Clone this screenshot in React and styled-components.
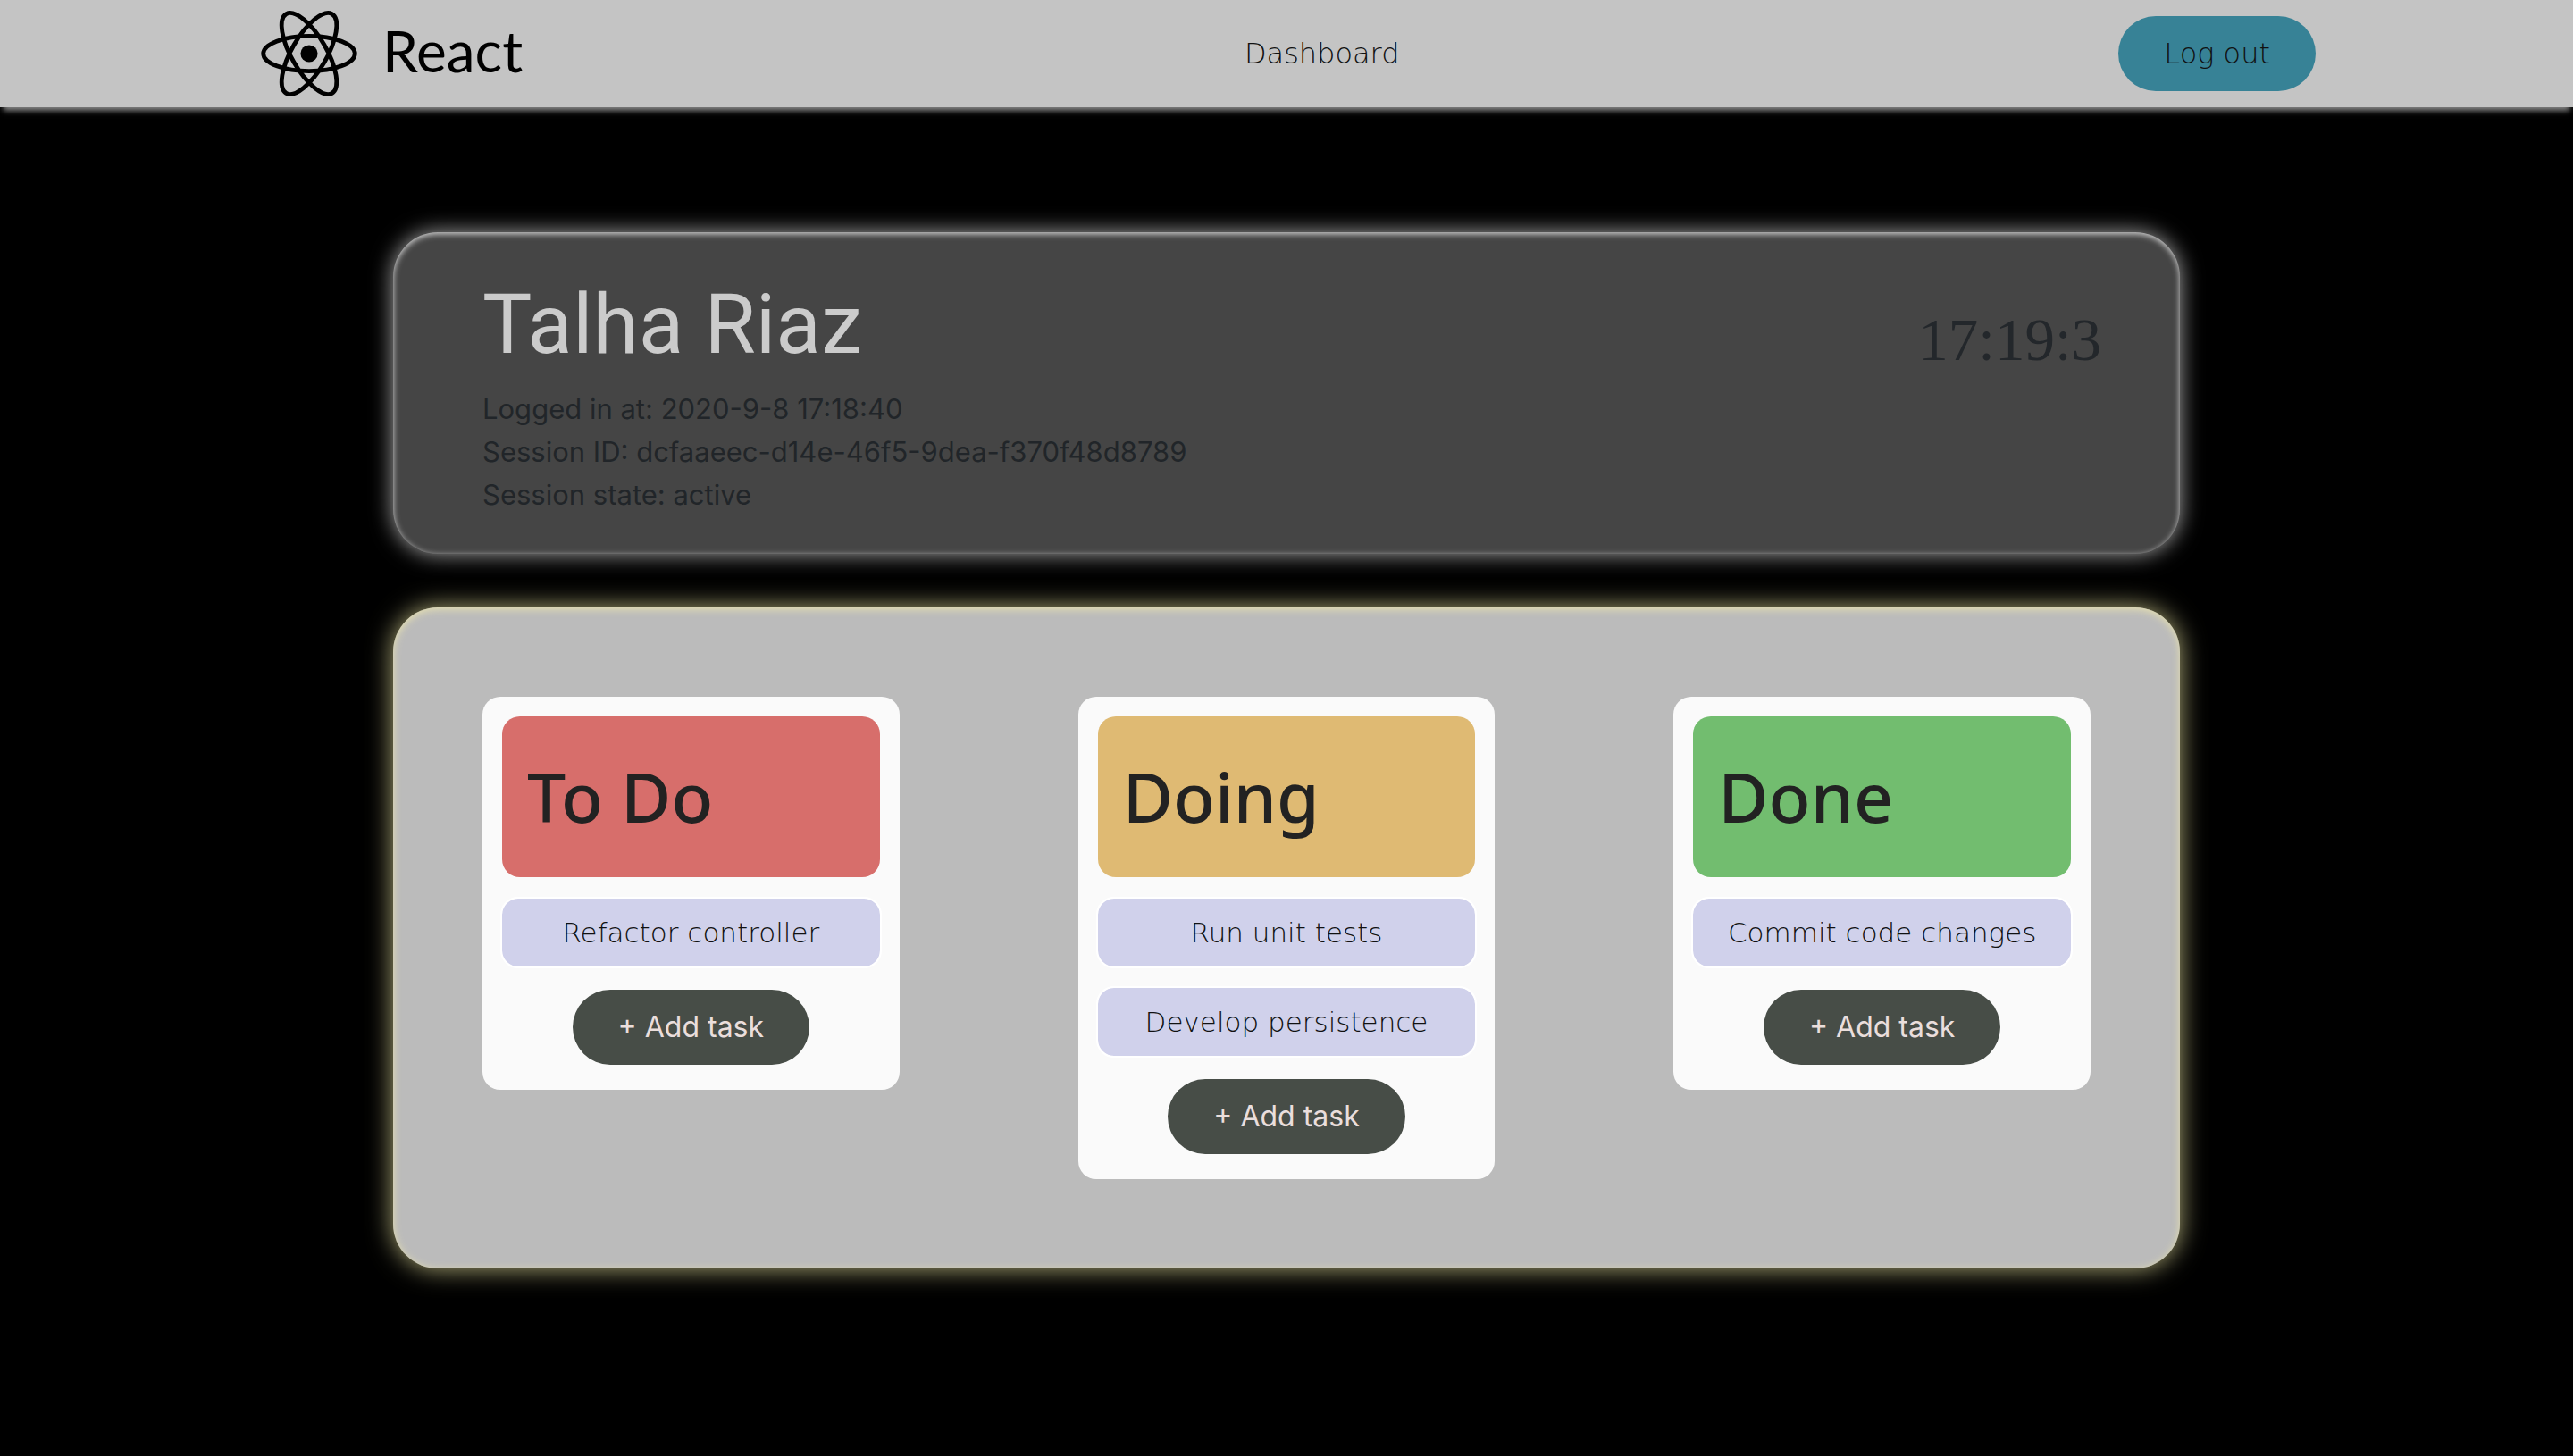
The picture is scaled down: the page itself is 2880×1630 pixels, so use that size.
import React from 'react';
import styled, { createGlobalStyle } from 'styled-components';

const thin = '"DejaVu Sans", sans-serif';
const ui = 'Inter, sans-serif';

const GlobalStyle = createGlobalStyle`
  *, *::before, *::after { box-sizing: border-box; }
  body { margin: 0; background: #000; color: #212529; font-family: ${ui}; font-size: 31px; line-height: 48px; }
  h1, h2, p, ul { margin: 0; padding: 0; }
`;

const Page = styled.div`
  min-height: 100vh;
  padding-bottom: 60px;
`;

const Header = styled.header`
  display: flex;
  align-items: center;
  justify-content: space-between;
  height: 120px;
  padding: 0 10%;
  background: #c4c4c4;
  box-shadow: 0 8px 6px -4px #858585;
`;

const Logo = styled.a`
  display: flex;
  align-items: center;
  gap: 24px;
  width: 300px;
  color: #000;
  font: 400 64px/72px Lato, sans-serif;
  text-decoration: none;
`;

const Wordmark = styled.span`
  padding-bottom: 6px;
`;

const Atom = styled.svg`
  flex: none;
  width: 116px;
  height: 104px;
`;

const NavLink = styled.a`
  color: #111;
  font: 200 32px/48px ${thin};
  text-decoration: none;
`;

const PillButton = styled.button`
  height: 84px;
  padding: 0 51px;
  border: 0;
  border-radius: 42px;
  background: ${(p) => (p.$primary ? '#378296' : '#474d47')};
  color: ${(p) => (p.$primary ? '#111' : '#eadedc')};
  font: ${(p) => (p.$primary ? `200 32px/48px ${thin}` : `400 32px/48px ${ui}`)};
  cursor: pointer;
`;

const Main = styled.main`
  display: flex;
  flex-direction: column;
  gap: 60px;
  width: calc(100% - 880px);
  min-width: 1600px;
  margin: 140px auto 0;
`;

const Profile = styled.section`
  display: flex;
  justify-content: space-between;
  align-items: flex-start;
  padding: 46px 88px 42px 100px;
  border-radius: 50px;
  background: #454545;
  box-shadow: 0 0 24px #aaa, inset 0 2px 7px #d8d8d8;
`;

const Name = styled.h1`
  margin-bottom: 12px;
  color: #cbcbcb;
  font: 400 93px/116px Roboto, sans-serif;
`;

const Clock = styled.time`
  padding-top: 34px;
  color: #23272b;
  font: 400 67px/80px "Liberation Serif", serif;
`;

const Board = styled.section`
  display: grid;
  grid-template-columns: repeat(3, 1fr);
  align-items: start;
  gap: 200px;
  padding: 100px;
  border-radius: 50px;
  background: #bbb;
  box-shadow: 0 0 28px #b4b07c, inset 0 2px 10px #e8e2b0;
`;

const Column = styled.section`
  display: flex;
  flex-direction: column;
  align-items: center;
  padding: 22px 22px 28px;
  border-radius: 20px;
  background: #fafafa;
`;

const Title = styled.h2`
  width: 100%;
  padding: 42px 28px;
  border-radius: 20px;
  background: ${(p) => p.$tone};
  color: #222;
  font: 500 77px/96px "Noto Sans", sans-serif;
`;

const Tasks = styled.ul`
  display: grid;
  gap: 24px;
  width: 100%;
  margin: 24px 0 26px;
  list-style: none;
`;

const Task = styled.li`
  padding: 14px 20px;
  border-radius: 18px;
  outline: 2px solid #fff;
  background: #d0d1eb;
  color: #111;
  font: 200 31px/48px ${thin};
  text-align: center;
  white-space: nowrap;
`;

const columns = [
  { title: 'To Do', tone: '#d76e6b', tasks: ['Refactor controller'] },
  { title: 'Doing', tone: '#dfba73', tasks: ['Run unit tests', 'Develop persistence'] },
  { title: 'Done', tone: '#72bd6f', tasks: ['Commit code changes'] },
];

function ReactAtom() {
  return (
    <Atom viewBox="-58 -52 116 104" fill="none" stroke="#000" strokeWidth="4.8" aria-hidden="true">
      {[0, 60, 120].map((angle) => (
        <ellipse key={angle} rx="51.3" ry="19.6" transform={`rotate(${angle})`} />
      ))}
      <circle r="9.6" fill="#000" stroke="none" />
    </Atom>
  );
}

export default function App() {
  return (
    <Page>
      <GlobalStyle />
      <Header>
        <Logo href="#home">
          <ReactAtom />
          <Wordmark>React</Wordmark>
        </Logo>
        <NavLink href="#dashboard">Dashboard</NavLink>
        <PillButton type="button" $primary>Log out</PillButton>
      </Header>
      <Main>
        <Profile>
          <div>
            <Name>Talha Riaz</Name>
            <p>Logged in at: 2020-9-8 17:18:40</p>
            <p>Session ID: dcfaaeec-d14e-46f5-9dea-f370f48d8789</p>
            <p>Session state: active</p>
          </div>
          <Clock>17:19:3</Clock>
        </Profile>
        <Board>
          {columns.map(({ title, tone, tasks }) => (
            <Column key={title}>
              <Title $tone={tone}>{title}</Title>
              <Tasks>
                {tasks.map((task) => <Task key={task}>{task}</Task>)}
              </Tasks>
              <PillButton type="button">+ Add task</PillButton>
            </Column>
          ))}
        </Board>
      </Main>
    </Page>
  );
}
